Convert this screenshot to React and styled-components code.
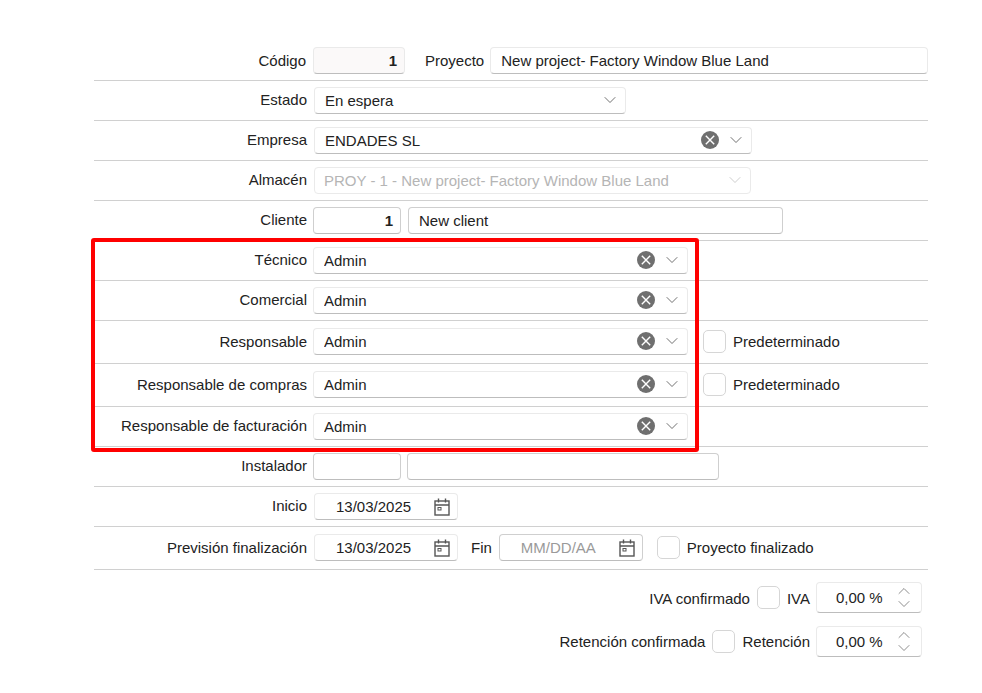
import React from "react";
import styled, { createGlobalStyle } from "styled-components";
import { ChevronDown, ChevronUp } from "lucide-react";

const GlobalStyle = createGlobalStyle`
  html, body {
    margin: 0;
    background: #fff;
  }
  body {
    font-family: "Liberation Sans", Arial, sans-serif;
    font-size: 15px;
    color: #222;
  }
`;

const Page = styled.div`
  position: relative;
  width: 834px;
  margin-left: 94px;
  padding-top: 41px;
`;

const Row = styled.div`
  display: flex;
  align-items: flex-start;
  box-sizing: border-box;
  height: ${(p) => (p.$tall ? 43 : 40)}px;
  padding-top: ${(p) => (p.$tall ? 7 : 6)}px;
  border-bottom: 1px solid #d0d0d0;
`;

const Label = styled.div`
  box-sizing: border-box;
  width: 213px;
  flex: none;
  margin-right: ${(p) => p.$gap ?? 6}px;
  padding-right: ${(p) => (p.$inset ? 1 : 0)}px;
  line-height: ${(p) => (p.$low ? 27 : 25)}px;
  text-align: right;
  white-space: nowrap;
`;

const InlineLabel = styled.div`
  flex: none;
  margin: 0 ${(p) => p.$right ?? 6}px 0 ${(p) => p.$left ?? 7}px;
  line-height: 27px;
  white-space: nowrap;
`;

const Field = styled.div`
  display: flex;
  align-items: center;
  flex: ${(p) => (p.$grow ? 1 : "none")};
  box-sizing: border-box;
  width: ${(p) => (p.$grow ? "auto" : `${p.$w}px`)};
  height: 27px;
  margin-left: ${(p) => p.$ml ?? 0}px;
  padding: 0 10px 0 ${(p) => (p.$off ? 9 : 10)}px;
  background: ${(p) => (p.$readOnly ? "#fbf9f9" : "#fff")};
  border: 1px solid ${(p) => (p.$strong ? "#cfcfcf" : "#eaeaea")};
  border-bottom-color: ${(p) => (p.$off ? "#eaeaea" : "#bdbdbd")};
  border-radius: 4px;
  color: ${(p) => (p.$off ? "#b5b5b5" : "#222")};
  white-space: nowrap;
`;

const NumberValue = styled.span`
  margin: 0 -3px 0 auto;
  font-weight: bold;
`;

const FieldText = styled.span`
  flex: 1;
  overflow: hidden;
`;

const ClearButton = styled.svg`
  flex: none;
  width: 18px;
  height: 18px;
  margin: -1px 7px 0 0;
`;

const Arrow = styled(ChevronDown)`
  flex: none;
  width: 20px;
  height: 20px;
  margin: -1px -5px 0 0;
  stroke-width: 1;
  color: ${(p) => (p.$off ? "#c4c4c4" : "#555")};
`;

const DateField = styled(Field)`
  padding: 0 7px 0 21px;
  color: ${(p) => (p.$empty ? "#9a9a9a" : "#222")};
`;

const CalendarIcon = styled.svg`
  flex: none;
  width: 16px;
  height: 18px;
  margin-left: auto;
`;

const Check = styled.span`
  flex: none;
  box-sizing: border-box;
  display: block;
  width: 23px;
  height: 23px;
  margin: 2px 0 0 ${(p) => p.$ml ?? 15}px;
  border: 1px solid #d6d6d6;
  border-radius: 5px;
  background: #fff;
`;

const TaxRows = styled.div`
  display: flex;
  flex-direction: column;
  gap: 13px;
  padding: 12px 6px 0 0;
`;

const TaxRow = styled.div`
  display: flex;
  justify-content: flex-end;
  align-items: center;
  height: 31px;
`;

const TaxText = styled.span`
  padding-top: ${(p) => (p.$low ? 2 : 0)}px;
  white-space: nowrap;
`;

const TaxCheck = styled(Check)`
  margin: 0 7px;
`;

const Percent = styled.div`
  display: flex;
  align-items: center;
  box-sizing: border-box;
  width: 106px;
  height: 31px;
  margin-left: 6px;
  padding: 0 7px 0 19px;
  border: 1px solid #eaeaea;
  border-bottom-color: #bdbdbd;
  border-radius: 4px;
`;

const PercentValue = styled.span`
  flex: 1;
`;

const Spinner = styled.div`
  display: flex;
  flex-direction: column;
  align-items: center;
  color: #777;
  svg {
    width: 20px;
    height: 20px;
    margin: -3.5px 0;
    stroke-width: 1;
  }
`;

const Highlight = styled.div`
  position: absolute;
  top: 238px;
  left: -3px;
  width: 608px;
  height: 214px;
  box-sizing: border-box;
  border: 4px solid #f00;
  border-radius: 3px;
  pointer-events: none;
`;

const Clear = () => (
  <ClearButton viewBox="0 0 18 18">
    <circle cx="9" cy="9" r="9" fill="#6f6f6f" />
    <path d="M4.8 4.8l8.4 8.4M13.2 4.8l-8.4 8.4" stroke="#fff" strokeWidth="1.4" fill="none" />
  </ClearButton>
);

const Calendar = () => (
  <CalendarIcon viewBox="0 0 16 18" fill="none" stroke="#555" strokeWidth="1.4">
    <rect x="1" y="3" width="14" height="14" />
    <path d="M1 7h14M4.5 0.5v4M11.5 0.5v4" />
    <rect x="4" y="9.5" width="3" height="2.5" strokeWidth="1" />
  </CalendarIcon>
);

const people = [
  { label: "Técnico" },
  { label: "Comercial" },
  { label: "Responsable", check: true, tall: true, low: true },
  { label: "Responsable de compras", check: true, tall: true, low: true },
  { label: "Responsable de facturación" },
];

export default function App() {
  return (
    <Page>
      <GlobalStyle />
      <Row>
        <Label $low $inset>Código</Label>
        <Field $w={92} $readOnly>
          <NumberValue>1</NumberValue>
        </Field>
        <InlineLabel $left={20}>Proyecto</InlineLabel>
        <Field $grow>New project- Factory Window Blue Land</Field>
      </Row>
      <Row>
        <Label $gap={7}>Estado</Label>
        <Field $w={312}>
          <FieldText>En espera</FieldText>
          <Arrow />
        </Field>
      </Row>
      <Row>
        <Label $gap={7}>Empresa</Label>
        <Field $w={438}>
          <FieldText>ENDADES SL</FieldText>
          <Clear />
          <Arrow />
        </Field>
      </Row>
      <Row>
        <Label $gap={7}>Almacén</Label>
        <Field $w={437} $off>
          <FieldText>PROY - 1 - New project- Factory Window Blue Land</FieldText>
          <Arrow $off />
        </Field>
      </Row>
      <Row>
        <Label>Cliente</Label>
        <Field $w={88} $strong>
          <NumberValue>1</NumberValue>
        </Field>
        <Field $w={375} $ml={7} $strong>New client</Field>
      </Row>
      {people.map((p) => (
        <Row key={p.label} $tall={p.tall}>
          <Label $low={p.low}>{p.label}</Label>
          <Field $w={375}>
            <FieldText>Admin</FieldText>
            <Clear />
            <Arrow />
          </Field>
          {p.check && (
            <>
              <Check />
              <InlineLabel>Predeterminado</InlineLabel>
            </>
          )}
        </Row>
      ))}
      <Row>
        <Label>Instalador</Label>
        <Field $w={88} $strong />
        <Field $w={312} $ml={6} $strong />
      </Row>
      <Row>
        <Label $gap={7}>Inicio</Label>
        <DateField $w={144}>
          13/03/2025
          <Calendar />
        </DateField>
      </Row>
      <Row $tall>
        <Label $gap={7} $low>Previsión finalización</Label>
        <DateField $w={144}>
          13/03/2025
          <Calendar />
        </DateField>
        <InlineLabel $left={13} $right={7}>Fin</InlineLabel>
        <DateField $w={144} $strong $empty>
          MM/DD/AA
          <Calendar />
        </DateField>
        <Check $ml={14} />
        <InlineLabel>Proyecto finalizado</InlineLabel>
      </Row>
      <TaxRows>
        <TaxRow>
          <TaxText $low>IVA confirmado</TaxText>
          <TaxCheck />
          <TaxText $low>IVA</TaxText>
          <Percent>
            <PercentValue>0,00 %</PercentValue>
            <Spinner>
              <ChevronUp />
              <ChevronDown />
            </Spinner>
          </Percent>
        </TaxRow>
        <TaxRow>
          <TaxText>Retención confirmada</TaxText>
          <TaxCheck />
          <TaxText>Retención</TaxText>
          <Percent>
            <PercentValue>0,00 %</PercentValue>
            <Spinner>
              <ChevronUp />
              <ChevronDown />
            </Spinner>
          </Percent>
        </TaxRow>
      </TaxRows>
      <Highlight />
    </Page>
  );
}
